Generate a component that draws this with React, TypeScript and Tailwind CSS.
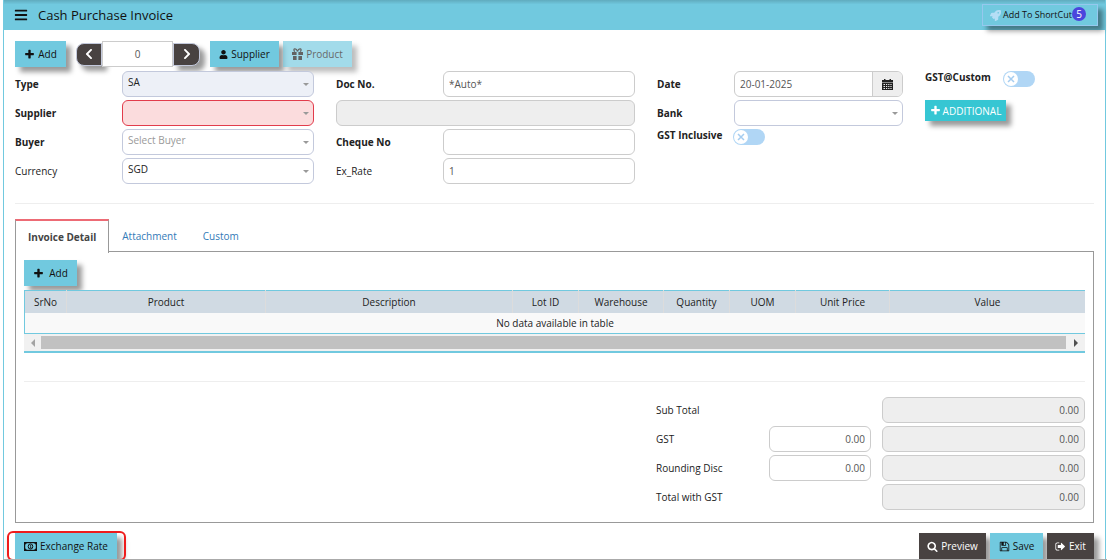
import type { ReactNode } from "react";
import clsx from "clsx";
import { FaBars, FaChevronLeft, FaChevronRight, FaRocket, FaUser } from "react-icons/fa";

const SHADOW = "shadow-[5px_5px_5px_rgba(0,0,0,0.4)]";

function Icon({ d, className }: { d: string; className?: string }) {
  return (
    <svg viewBox="0 0 1792 1792" fill="currentColor" aria-hidden="true" className={clsx("shrink-0", className ?? "size-3")}>
      <path d={d} />
    </svg>
  );
}

const PLUS =
  "M1600 736v192q0 40-28 68t-68 28h-416v416q0 40-28 68t-68 28h-192q-40 0-68-28t-28-68v-416h-416q-40 0-68-28t-28-68v-192q0-40 28-68t68-28h416v-416q0-40 28-68t68-28h192q40 0 68 28t28 68v416h416q40 0 68 28t28 68z";
const SEARCH =
  "M1216 832q0-185-131.5-316.5t-316.5-131.5-316.5 131.5-131.5 316.5 131.5 316.5 316.5 131.5 316.5-131.5 131.5-316.5zm512 832q0 52-38 90t-90 38q-54 0-90-38l-343-342q-179 124-399 124-143 0-273.5-55.5t-225-150-150-225-55.5-273.5 55.5-273.5 150-225 225-150 273.5-55.5 273.5 55.5 225 150 150 225 55.5 273.5q0 220-124 399l343 343q37 37 37 90z";
const SIGN_OUT =
  "M704 1440q0 4 1 20t.5 26.5-3 23.5-10 19.5-20.5 6.5h-320q-119 0-203.5-84.5t-84.5-203.5v-704q0-119 84.5-203.5t203.5-84.5h320q13 0 22.5 9.5t9.5 22.5q0 4 1 20t.5 26.5-3 23.5-10 19.5-20.5 6.5h-320q-66 0-113 47t-47 113v704q0 66 47 113t113 47h312l11.5 1 11.5 3 8 5.5 7 9 2 13.5zm928-544q0 26-19 45l-544 544q-19 19-45 19t-45-19-19-45v-288h-448q-26 0-45-19t-19-45v-384q0-26 19-45t45-19h448v-288q0-26 19-45t45-19 45 19l544 544q19 19 19 45z";
const SAVE =
  "M512 1536h768v-384h-768v384zm896 0h128v-896q0-14-10-38.5t-20-34.5l-281-281q-10-10-34-20t-39-10v416q0 40-28 68t-68 28h-576q-40 0-68-28t-28-68v-416h-128v1280h128v-416q0-40 28-68t68-28h832q40 0 68 28t28 68v416zm-384-928v-320q0-13-9.5-22.5t-22.5-9.5h-192q-13 0-22.5 9.5t-9.5 22.5v320q0 13 9.5 22.5t22.5 9.5h192q13 0 22.5-9.5t9.5-22.5zm640 32v928q0 40-28 68t-68 28h-1344q-40 0-68-28t-28-68v-1344q0-40 28-68t68-28h928q40 0 88 20t76 48l280 280q28 28 48 76t20 88z";

function GiftIcon() {
  return (
    <svg viewBox="0 0 11 12" className="h-3 w-[11px] shrink-0" fill="currentColor" aria-hidden="true">
      <path d="M0 4h4.6v3H0zM6.4 4H11v3H6.4zM1 8h3.6v4H1zM6.4 8H10v4H6.4z" />
      <path d="M5.5 3.5C4.8 1.2 3.6.7 2.6.9 1.500 1.200 1.700 3 3 3.500M5.500 3.500C6.200 1.200 7.400.7 8.400.9 9.500 1.200 9.300 3 8 3.500" fill="none" stroke="currentColor" strokeWidth="1.200" />
    </svg>
  );
}

function MoneyIcon() {
  return (
    <svg viewBox="0 0 13 9" className="h-[9px] w-[13px] shrink-0" fill="none" stroke="currentColor" aria-hidden="true">
      <rect x="0.600" y="0.600" width="11.800" height="7.800" strokeWidth="1.200" />
      <path d="M1 1h1.500L1 2.500zM12 1h-1.500L12 2.500zM1 8h1.500L1 6.500zM12 8h-1.500L12 6.500z" fill="currentColor" strokeWidth="0.500" />
      <ellipse cx="6.500" cy="4.500" rx="2.300" ry="2.600" strokeWidth="1" />
      <path d="M5.900 3.400l.8-.4v3M5.700 6h1.800" strokeWidth="0.800" />
    </svg>
  );
}

function CalendarIcon() {
  return (
    <svg viewBox="0 0 11 11" className="size-[11px]" fill="currentColor" aria-hidden="true">
      <path d="M2 0h1.500v1h4V0H9v1h2v2.500H0V1h2z" />
      <path
        fillRule="evenodd"
        d="M0 4h11v7H0zM1.500 5v1H3V5zM4 5v1h1.200V5zM6.200 5v1h1.200V5zM8.400 5v1h1.200V5zM1.500 7v1H3V7zM4 7v1h1.200V7zM6.200 7v1h1.200V7zM8.400 7v1h1.200V7zM1.500 9v1H3V9zM4 9v1h1.200V9zM6.200 9v1h1.200V9zM8.400 9v1h1.200V9z"
      />
    </svg>
  );
}

interface ButtonProps {
  children: ReactNode;
  className?: string;
}

function Button({ children, className = "bg-[#71c9df] text-[#111]" }: ButtonProps) {
  return (
    <button type="button" className={clsx("flex h-[26px] items-center justify-center gap-[3px] whitespace-nowrap", SHADOW, className)}>
      {children}
    </button>
  );
}

interface FieldProps {
  id: string;
  label: string;
  light?: boolean;
  narrow?: boolean;
  children: ReactNode;
}

function Field({ id, label, light, narrow, children }: FieldProps) {
  return (
    <div className="flex h-[26px] items-center">
      <label htmlFor={id} className={clsx("shrink-0", light ? "font-normal" : "font-bold", narrow ? "w-[77px]" : "w-[107px]")}>
        {label}
      </label>
      {children}
    </div>
  );
}

interface SelectProps {
  id: string;
  value?: string;
  className?: string;
}

function Select({ id, value = "", className = "border-[#c3c9dc] bg-white" }: SelectProps) {
  return (
    <div className="relative h-[26px] min-w-0 flex-1">
      <select id={id} className={clsx("size-full appearance-none rounded-md border px-[5px] pb-1", className)}>
        <option>{value}</option>
      </select>
      <svg viewBox="0 0 6 3" className="pointer-events-none absolute top-3 right-[5px] h-[3px] w-1.5" fill="#999" aria-hidden="true">
        <path d="M0 0h6L3 3z" />
      </svg>
    </div>
  );
}

const INPUT = "h-[26px] min-w-0 rounded-md border border-[#ccc] px-[5px] text-[#555]";

function Toggle({ id }: { id: string }) {
  return (
    <span className="relative flex h-4 w-8 shrink-0 items-center rounded-full bg-[#b0d6f5] p-px">
      <input id={id} type="checkbox" className="absolute inset-0 size-full opacity-0" />
      <span className="flex size-[14px] items-center justify-center rounded-full bg-white">
        <svg viewBox="0 0 8 8" className="size-2" stroke="#a5cdf0" strokeWidth="1.500" aria-hidden="true">
          <path d="M1 1l6 6M7 1L1 7" />
        </svg>
      </span>
    </span>
  );
}

const columns = [
  { title: "SrNo", width: "w-[42px]" },
  { title: "Product", width: "w-[199px]" },
  { title: "Description", width: "w-[247px]" },
  { title: "Lot ID", width: "w-[66px]" },
  { title: "Warehouse", width: "w-[85px]" },
  { title: "Quantity", width: "w-[66px]" },
  { title: "UOM", width: "w-[66px]" },
  { title: "Unit Price", width: "w-[94px]" },
  { title: "Value", width: "w-auto" },
];

const totals = [
  { id: "subtotal", label: "Sub Total", editable: false },
  { id: "gst", label: "GST", editable: true },
  { id: "rounding", label: "Rounding Disc", editable: true },
  { id: "total", label: "Total with GST", editable: false },
];

function Header() {
  return (
    <header className="flex h-[30px] items-center bg-[#71c9df] bg-linear-to-b from-black/15 to-transparent to-15% pr-[7px] pl-2.5 text-[#111]">
      <button type="button" aria-label="Menu">
        <FaBars className="size-[14px]" />
      </button>
      <h1 className="ml-2.5 text-[13px]">Cash Purchase Invoice</h1>
      <button
        type="button"
        className={clsx("relative ml-auto flex h-[22px] w-[116px] items-center gap-0.5 border border-[#96c8ee] pl-[7px] text-[9px]", SHADOW)}
      >
        <FaRocket className="size-[11px] text-[#b5def5]" />
        <span className="whitespace-nowrap">Add To ShortCut</span>
        <span className="absolute top-0.5 right-[11px] flex size-[14px] items-center justify-center rounded-full bg-[#4b45dd] text-[10px] text-white">
          5
        </span>
      </button>
    </header>
  );
}

function Toolbar() {
  return (
    <div className="flex items-center">
      <div className="w-[51px]">
        <Button className="w-full bg-[#71c9df] text-[#111]">
          <Icon d={PLUS} className="size-[11px]" />
          Add
        </Button>
      </div>
      <div className="ml-2.5 flex items-center">
        <button
          type="button"
          aria-label="Previous"
          className={clsx("flex h-[23px] w-[26px] items-center justify-center rounded-l-lg border border-[#c3c9dc] bg-[#484241] text-white", SHADOW)}
        >
          <FaChevronLeft className="size-3" />
        </button>
        <input aria-label="Record" defaultValue="0" className="relative h-[26px] w-[71px] border border-[#ccc] bg-white text-center text-[#555]" />
        <button
          type="button"
          aria-label="Next"
          className={clsx("flex h-[23px] w-[27px] items-center justify-center rounded-r-lg border border-[#c3c9dc] bg-[#484241] text-white", SHADOW)}
        >
          <FaChevronRight className="size-3" />
        </button>
      </div>
      <div className="ml-2.5 flex gap-1">
        <Button className="w-[69px] bg-[#71c9df] text-[#111]">
          <FaUser className="size-[9px]" />
          Supplier
        </Button>
        <Button className="w-[69px] bg-[#71c9df] text-[#111] opacity-65">
          <GiftIcon />
          Product
        </Button>
      </div>
    </div>
  );
}

function InvoiceForm() {
  return (
    <form className="mt-1 grid grid-cols-[minmax(0,299fr)_minmax(0,299fr)_minmax(0,246fr)_minmax(0,169fr)] gap-x-[22px]">
      <div className="flex flex-col gap-[3px]">
        <Field id="type" label="Type">
          <Select id="type" value="SA" className="border-[#c3c9dc] bg-[#edf0f7]" />
        </Field>
        <Field id="supplier" label="Supplier">
          <Select id="supplier" className="border-[#e23c4c] bg-[#fbdcdd]" />
        </Field>
        <Field id="buyer" label="Buyer">
          <Select id="buyer" value="Select Buyer" className="border-[#c3c9dc] bg-white text-[#999]" />
        </Field>
        <Field id="currency" label="Currency" light>
          <Select id="currency" value="SGD" />
        </Field>
      </div>
      <div className="flex flex-col gap-[3px]">
        <Field id="doc-no" label="Doc No.">
          <input id="doc-no" defaultValue="*Auto*" className={clsx(INPUT, "flex-1")} />
        </Field>
        <input aria-label="Supplier name" readOnly className={clsx(INPUT, "w-full bg-[#eee]")} />
        <Field id="cheque" label="Cheque No">
          <input id="cheque" className={clsx(INPUT, "flex-1")} />
        </Field>
        <Field id="rate" label="Ex_Rate" light>
          <input id="rate" defaultValue="1" className={clsx(INPUT, "flex-1")} />
        </Field>
      </div>
      <div className="flex flex-col gap-[3px]">
        <Field id="date" label="Date" narrow>
          <div className="flex h-[26px] min-w-0 flex-1 overflow-hidden rounded-md border border-[#ccc]">
            <input id="date" defaultValue="20-01-2025" className="min-w-0 flex-1 px-[5px] text-[#555]" />
            <button type="button" aria-label="Pick a date" className="flex w-[30px] items-center justify-center border-l border-[#ccc] bg-[#eee]">
              <CalendarIcon />
            </button>
          </div>
        </Field>
        <Field id="bank" label="Bank" narrow>
          <Select id="bank" />
        </Field>
        <div className="flex">
          <label htmlFor="gst-inclusive" className="w-[76px] leading-3 font-bold whitespace-nowrap">
            GST Inclusive
          </label>
          <Toggle id="gst-inclusive" />
        </div>
      </div>
      <div>
        <div className="flex">
          <label htmlFor="gst-custom" className="w-[78px] leading-3 font-bold">
            GST@Custom
          </label>
          <Toggle id="gst-custom" />
        </div>
        <button type="button" className={clsx("mt-[13px] flex h-[21px] w-[81px] items-center justify-center gap-0.5 bg-[#36c6d3] text-[11px] text-white", SHADOW)}>
          <Icon d={PLUS} className="size-[11px]" />
          <span className="text-[10px]">ADDITIONAL</span>
        </button>
      </div>
    </form>
  );
}

function InvoiceTable() {
  return (
    <div className="mt-1 border-b-2 border-[#71c9df]">
      <table className="w-full table-fixed border-y border-l border-[#71c9df]">
        <thead>
          <tr className="h-[22px] bg-[#d0dae3]">
            {columns.map(({ title, width }) => (
              <th key={title} className={clsx("border-r border-[#dcdcdc] p-0 font-normal last:border-r-0", width)}>
                {title}
              </th>
            ))}
          </tr>
        </thead>
        <tbody>
          <tr className="h-[21px] bg-[#f9f9f9]">
            <td colSpan={columns.length} className="p-0 text-center">
              No data available in table
            </td>
          </tr>
        </tbody>
      </table>
      <div className="flex h-[17px] items-center bg-[#f1f1f1]">
        <span className="flex w-[17px] justify-center">
          <svg viewBox="0 0 4 8" className="h-2 w-1" fill="#a3a3a3" aria-hidden="true">
            <path d="M4 0v8L0 4z" />
          </svg>
        </span>
        <span className="h-[13px] flex-1 bg-[#c1c1c1]" />
        <span className="flex w-[19px] justify-center">
          <svg viewBox="0 0 4 8" className="h-2 w-1" fill="#505050" aria-hidden="true">
            <path d="M0 0v8l4-4z" />
          </svg>
        </span>
      </div>
    </div>
  );
}

function Totals() {
  return (
    <div className="mt-[15px] ml-auto flex w-[429px] max-w-full flex-col gap-[3px]">
      {totals.map(({ id, label, editable }) => (
        <div key={id} className="flex items-center">
          <label htmlFor={id} className="w-[113px]">
            {label}
          </label>
          {editable && <input aria-label={`${label} amount`} defaultValue="0.00" className={clsx(INPUT, "w-[102px] text-right")} />}
          <input id={id} readOnly defaultValue="0.00" className={clsx(INPUT, "ml-auto w-[203px] bg-[#eee] text-right")} />
        </div>
      ))}
    </div>
  );
}

export default function App() {
  return (
    <div className="bg-white pl-[3px] font-['Open_Sans','Noto_Sans',sans-serif] text-[10px] leading-4 text-[#222]">
      <div className="mr-px border-x border-[#71c9df]">
        <Header />
        <main className="px-[11px] pt-[11px]">
          <Toolbar />
          <InvoiceForm />
          <hr className="mt-[19px] border-[#eee]" />

          {/* Tabs */}
          <nav className="relative mt-[15px] flex h-[33px]">
            <a href="#detail" className="-mb-px flex items-center border-x border-t-2 border-x-[#999] border-t-[#ed6b75] bg-white px-3 font-bold whitespace-nowrap text-[#444]">
              Invoice Detail
            </a>
            <a href="#attachment" className="flex items-center px-[13px] text-[#337ab7]">
              Attachment
            </a>
            <a href="#custom" className="flex items-center px-[13px] text-[#337ab7]">
              Custom
            </a>
          </nav>
          <section className="-mt-px border border-[#999] px-2 pt-2 pb-3">
            <Button className="w-[53px] bg-[#71c9df] text-[#111]">
              <Icon d={PLUS} className="mr-0.5 size-[11px]" />
              Add
            </Button>
            <InvoiceTable />
            <hr className="mt-7 border-[#eee]" />
            <Totals />
          </section>
        </main>

        {/* Footer actions */}
        <footer className="relative flex h-[36px] items-end justify-between overflow-hidden px-[11px]">
          <Button className="w-[102px] bg-[#71c9df] text-[#111]">
            <MoneyIcon />
            Exchange Rate
          </Button>
          <span className="pointer-events-none absolute top-2 left-[3px] h-[30px] w-[119px] rounded-md border-2 border-[#ee1c1c] shadow-md" />
          <div className="flex gap-1">
            <Button className="w-[67px] bg-[#484241] text-white">
              <Icon d={SEARCH} className="size-[11px]" />
              Preview
            </Button>
            <Button className="w-[53px] bg-[#71c9df] text-[#111]">
              <Icon d={SAVE} className="size-[11px]" />
              Save
            </Button>
            <Button className="w-[47px] bg-[#484241] text-white">
              <Icon d={SIGN_OUT} className="size-[11px]" />
              Exit
            </Button>
          </div>
        </footer>
      </div>
      <div className="border-t border-[#aaa]" />
    </div>
  );
}
